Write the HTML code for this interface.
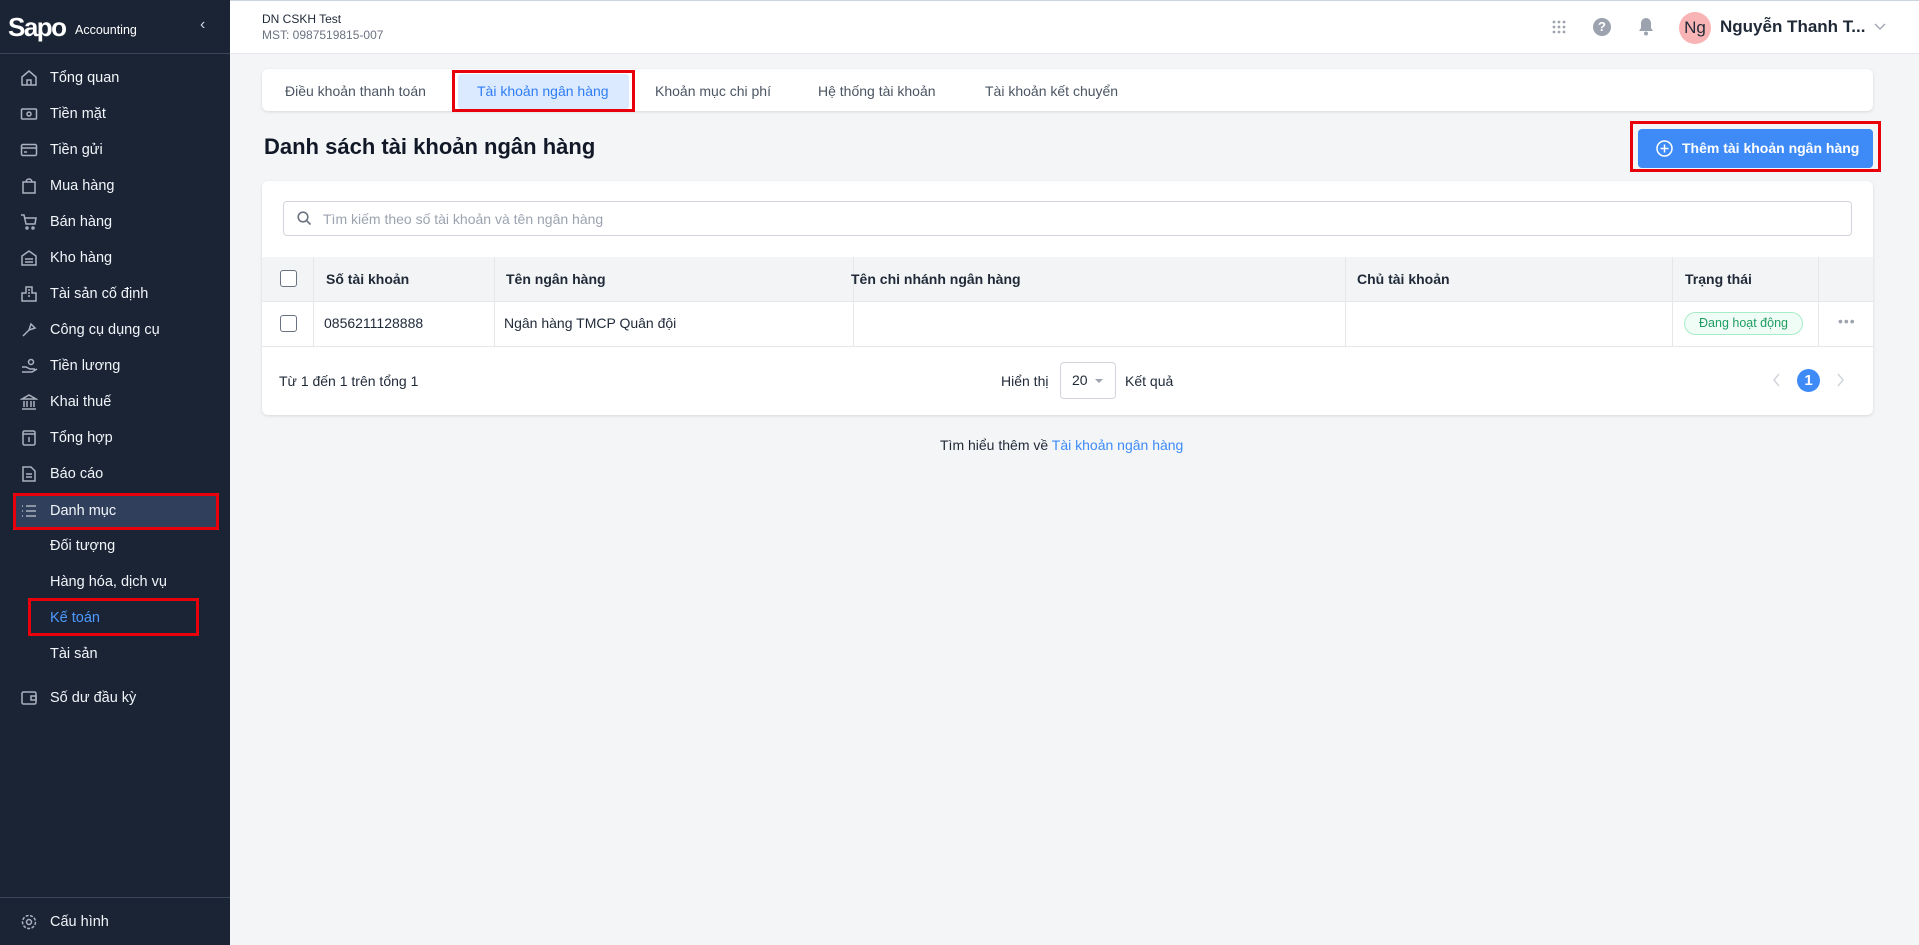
<!DOCTYPE html>
<html><head><meta charset="utf-8"><style>
*{box-sizing:border-box;margin:0;padding:0}
body{width:1919px;height:945px;overflow:hidden;font-family:"Liberation Sans",Arial,sans-serif;background:#f4f5f7;position:relative;color:#1f2937}
.sb{position:absolute;left:0;top:0;width:230px;height:945px;background:#1b2435;color:#e5e7eb}
.logo{height:54px;border-bottom:1px solid #3a4558;position:relative}
.logo .s{position:absolute;left:8px;top:12px;font-size:26px;font-weight:bold;color:#fff;letter-spacing:-1.5px}
.logo .a{position:absolute;left:75px;top:23px;font-size:12.5px;color:#fff}
.logo .c{position:absolute;left:200px;top:16px;font-size:16px;color:#cbd5e1}
.mi{position:absolute;left:0;width:230px;height:36px;font-size:14.5px;color:#f1f5f9;line-height:36px}
.mi svg{position:absolute;left:20px;top:9px;width:18px;height:18px;fill:none;stroke:#aab2bf;stroke-width:1.5}
.mi span{position:absolute;left:50px}
.hd{position:absolute;left:230px;top:0;right:0;height:54px;background:#fff;border-bottom:1px solid #e5e7eb;border-top:1px solid #cbd5e1}
.card{position:absolute;background:#fff;border-radius:6px;box-shadow:0 1px 3px rgba(0,0,0,.12)}
.red{position:absolute;border:3px solid #e8000b}
.tab{position:absolute;top:83px;font-size:14px;color:#4b5563}
.th{position:absolute;top:257px;height:44px;line-height:44px;font-size:14px;font-weight:bold;color:#1f2937}
.td{position:absolute;top:301px;height:45px;line-height:45px;font-size:14px;color:#1f2937}
.vl{position:absolute;width:1px;background:#e5e7eb}
.cb{position:absolute;left:280px;width:17px;height:17px;border:1.5px solid #6b7280;border-radius:3px;background:#fff}
</style></head><body>
<div class="sb">
 <div class="logo"><span class="s">Sapo</span><span class="a">Accounting</span><span class="c">‹</span></div>
 <div class="mi" style="top:60px"><svg viewBox="0 0 18 18"><path d="M2 8l7-6 7 6v8H2z M7 16v-5h4v5"/></svg><span>Tổng quan</span></div>
 <div class="mi" style="top:96px"><svg viewBox="0 0 18 18"><rect x="1.5" y="4" width="15" height="10" rx="1"/><circle cx="9" cy="9" r="2"/></svg><span>Tiền mặt</span></div>
 <div class="mi" style="top:132px"><svg viewBox="0 0 18 18"><rect x="1.5" y="3.5" width="15" height="11" rx="1.5"/><path d="M1.5 7h15M4 11h3"/></svg><span>Tiền gửi</span></div>
 <div class="mi" style="top:168px"><svg viewBox="0 0 18 18"><path d="M3 5h12v11H3z M6 5a3 3 0 016 0"/></svg><span>Mua hàng</span></div>
 <div class="mi" style="top:204px"><svg viewBox="0 0 18 18"><path d="M1 2h3l2 9h9l1-6H5"/><circle cx="7" cy="15" r="1"/><circle cx="13" cy="15" r="1"/></svg><span>Bán hàng</span></div>
 <div class="mi" style="top:240px"><svg viewBox="0 0 18 18"><path d="M2 16V7l7-5 7 5v9z M5 10h8M5 13h8"/></svg><span>Kho hàng</span></div>
 <div class="mi" style="top:276px"><svg viewBox="0 0 18 18"><path d="M2 16V8h4V2h6v6h4v8z M8 5h2M8 8h2M8 11h2"/></svg><span>Tài sản cố định</span></div>
 <div class="mi" style="top:312px"><svg viewBox="0 0 18 18"><path d="M3 15l6-6M9 9l2-6 4 4-6 2"/></svg><span>Công cụ dụng cụ</span></div>
 <div class="mi" style="top:348px"><svg viewBox="0 0 18 18"><circle cx="11" cy="5" r="2.5"/><path d="M2 10h4l4 2h5M2 15h10l5-3"/></svg><span>Tiền lương</span></div>
 <div class="mi" style="top:384px"><svg viewBox="0 0 18 18"><path d="M2 6l7-4 7 4z M4 8v6M7 8v6M11 8v6M14 8v6M2 16h14"/></svg><span>Khai thuế</span></div>
 <div class="mi" style="top:420px"><svg viewBox="0 0 18 18"><rect x="3" y="2" width="12" height="14" rx="1.5"/><path d="M3 5h12M9 8v5"/></svg><span>Tổng hợp</span></div>
 <div class="mi" style="top:456px"><svg viewBox="0 0 18 18"><path d="M3 2h8l4 4v10H3z M6 9h6M6 12h6"/></svg><span>Báo cáo</span></div>
 <div class="mi" style="top:493px;left:13px;width:204px;background:#2f3f5c;border-radius:3px"><svg viewBox="0 0 18 18" style="left:7px"><path d="M2 4h1M6 4h10M2 9h1M6 9h10M2 14h1M6 14h10"/></svg><span style="left:37px">Danh mục</span></div>
 <div class="mi" style="top:528px"><span>Đối tượng</span></div>
 <div class="mi" style="top:564px"><span>Hàng hóa, dịch vụ</span></div>
 <div class="mi" style="top:600px;color:#4d9bff"><span>Kế toán</span></div>
 <div class="mi" style="top:636px"><span>Tài sản</span></div>
 <div class="mi" style="top:680px"><svg viewBox="0 0 18 18"><rect x="2" y="3" width="14" height="12" rx="1.5"/><path d="M11 7h5v4h-5z"/></svg><span>Số dư đầu kỳ</span></div>
 <div style="position:absolute;left:0;right:0;top:897px;border-top:1px solid #3a4558"></div>
 <div class="mi" style="top:904px"><svg viewBox="0 0 18 18"><circle cx="9" cy="9" r="2.5"/><circle cx="9" cy="9" r="6.5" stroke-dasharray="3 1.5"/></svg><span>Cấu hình</span></div>
</div>
<div class="red" style="left:13px;top:493px;width:206px;height:37px"></div>
<div class="red" style="left:28px;top:598px;width:171px;height:38px"></div>

<div class="hd">
 <div style="position:absolute;left:32px;top:11px;font-size:12px;color:#1f2937">DN CSKH Test</div>
 <div style="position:absolute;left:32px;top:27px;font-size:12px;color:#6b7280">MST: 0987519815-007</div>
 <svg style="position:absolute;left:1321px;top:18px" width="16" height="16" viewBox="0 0 16 16" fill="#9ca3af"><circle cx="3" cy="3" r="1.4"/><circle cx="8" cy="3" r="1.4"/><circle cx="13" cy="3" r="1.4"/><circle cx="3" cy="8" r="1.4"/><circle cx="8" cy="8" r="1.4"/><circle cx="13" cy="8" r="1.4"/><circle cx="3" cy="13" r="1.4"/><circle cx="8" cy="13" r="1.4"/><circle cx="13" cy="13" r="1.4"/></svg>
 <div style="position:absolute;left:1363px;top:17px;width:18px;height:18px;border-radius:50%;background:#9ca3af;color:#fff;font-size:13px;font-weight:bold;text-align:center;line-height:18px">?</div>
 <svg style="position:absolute;left:1408px;top:16px" width="16" height="19" viewBox="0 0 16 19" fill="#9ca3af"><path d="M8 1a5 5 0 00-5 5v5l-2 3h14l-2-3V6a5 5 0 00-5-5z"/><circle cx="8" cy="16.5" r="2"/></svg>
 <div style="position:absolute;left:1449px;top:11px;width:32px;height:32px;border-radius:50%;background:#f8b4b4;color:#1f2937;font-size:17px;text-align:center;line-height:32px">Ng</div>
 <div style="position:absolute;left:1490px;top:16px;font-size:17px;font-weight:bold;color:#1f2937">Nguyễn Thanh T...</div>
 <svg style="position:absolute;left:1644px;top:22px" width="12" height="8" viewBox="0 0 12 8" fill="none" stroke="#9ca3af" stroke-width="1.3"><path d="M1 1l5 5 5-5"/></svg>
</div>

<div class="card" style="left:262px;top:69px;width:1611px;height:42px"></div>
<div style="position:absolute;left:458px;top:74px;width:171px;height:35px;background:#dbeafe;border-radius:3px"></div>
<div class="tab" style="left:285px">Điều khoản thanh toán</div>
<div class="tab" style="left:477px;color:#2f7df6">Tài khoản ngân hàng</div>
<div class="tab" style="left:655px">Khoản mục chi phí</div>
<div class="tab" style="left:818px">Hệ thống tài khoản</div>
<div class="tab" style="left:985px">Tài khoản kết chuyển</div>
<div class="red" style="left:452px;top:70px;width:183px;height:42px"></div>

<div style="position:absolute;left:264px;top:134px;font-size:22px;font-weight:bold;color:#111827">Danh sách tài khoản ngân hàng</div>
<div style="position:absolute;left:1638px;top:129px;width:235px;height:39px;background:#3e8bf8;border-radius:4px;color:#fff;font-size:14px;font-weight:bold;line-height:39px;padding-left:44px">Thêm tài khoản ngân hàng</div>
<svg style="position:absolute;left:1656px;top:140px" width="17" height="17" viewBox="0 0 17 17" fill="none" stroke="#fff" stroke-width="1.5"><circle cx="8.5" cy="8.5" r="7.5"/><path d="M8.5 4.5v8M4.5 8.5h8"/></svg>
<div class="red" style="left:1630px;top:121px;width:251px;height:51px"></div>

<div class="card" style="left:262px;top:181px;width:1611px;height:234px"></div>
<div style="position:absolute;left:283px;top:201px;width:1569px;height:35px;border:1px solid #d1d5db;border-radius:4px;background:#fff"></div>
<svg style="position:absolute;left:297px;top:211px" width="15" height="15" viewBox="0 0 15 15" fill="none" stroke="#6b7280" stroke-width="1.6"><circle cx="6" cy="6" r="4.8"/><path d="M9.5 9.5l4 4"/></svg>
<div style="position:absolute;left:323px;top:211px;font-size:14px;color:#9ca3af">Tìm kiếm theo số tài khoản và tên ngân hàng</div>
<div style="position:absolute;left:262px;top:257px;width:1611px;height:44px;background:#f3f4f6"></div>
<div style="position:absolute;left:262px;top:301px;width:1611px;height:1px;background:#e5e7eb"></div>
<div style="position:absolute;left:262px;top:346px;width:1611px;height:1px;background:#e5e7eb"></div>
<div class="vl" style="left:313px;top:257px;height:89px"></div>
<div class="vl" style="left:494px;top:257px;height:89px"></div>
<div class="vl" style="left:853px;top:257px;height:89px"></div>
<div class="vl" style="left:1345px;top:257px;height:89px"></div>
<div class="vl" style="left:1672px;top:257px;height:89px"></div>
<div class="vl" style="left:1818px;top:257px;height:89px"></div>
<div class="cb" style="top:270px"></div>
<div class="cb" style="top:315px"></div>
<div class="th" style="left:326px">Số tài khoản</div>
<div class="th" style="left:506px">Tên ngân hàng</div>
<div class="th" style="left:851px">Tên chi nhánh ngân hàng</div>
<div class="th" style="left:1357px">Chủ tài khoản</div>
<div class="th" style="left:1685px">Trạng thái</div>
<div class="td" style="left:324px">0856211128888</div>
<div class="td" style="left:504px">Ngân hàng TMCP Quân đội</div>
<div style="position:absolute;left:1684px;top:312px;width:119px;height:23px;border:1px solid #a7ecc9;border-radius:12px;background:#f0fdf6;color:#1f9d62;font-size:12.5px;text-align:center;line-height:21px">Đang hoạt động</div>
<div style="position:absolute;left:1838px;top:313px;font-size:14px;color:#9ca3af;letter-spacing:1px">•••</div>

<div style="position:absolute;left:279px;top:373px;font-size:14px">Từ 1 đến 1 trên tổng 1</div>
<div style="position:absolute;left:1001px;top:373px;font-size:14px">Hiển thị</div>
<div style="position:absolute;left:1060px;top:362px;width:56px;height:37px;border:1px solid #d1d5db;border-radius:4px;background:#fff;font-size:14px;line-height:35px;padding-left:11px">20</div>
<div style="position:absolute;left:1095px;top:379px;border-left:4px solid transparent;border-right:4px solid transparent;border-top:4px solid #9ca3af"></div>
<div style="position:absolute;left:1125px;top:373px;font-size:14px">Kết quả</div>
<svg style="position:absolute;left:1772px;top:373px" width="9" height="14" viewBox="0 0 9 14" fill="none" stroke="#d1d5db" stroke-width="1.5"><path d="M7 1L2 7l5 6"/></svg>
<div style="position:absolute;left:1797px;top:369px;width:23px;height:23px;border-radius:50%;background:#3e8bf8;color:#fff;font-size:15px;font-weight:bold;text-align:center;line-height:23px">1</div>
<svg style="position:absolute;left:1836px;top:373px" width="9" height="14" viewBox="0 0 9 14" fill="none" stroke="#d1d5db" stroke-width="1.5"><path d="M2 1l5 6-5 6"/></svg>

<div style="position:absolute;left:940px;top:437px;font-size:14px;color:#1f2937">Tìm hiểu thêm về <span style="color:#3e8bf8">Tài khoản ngân hàng</span></div>
</body></html>
